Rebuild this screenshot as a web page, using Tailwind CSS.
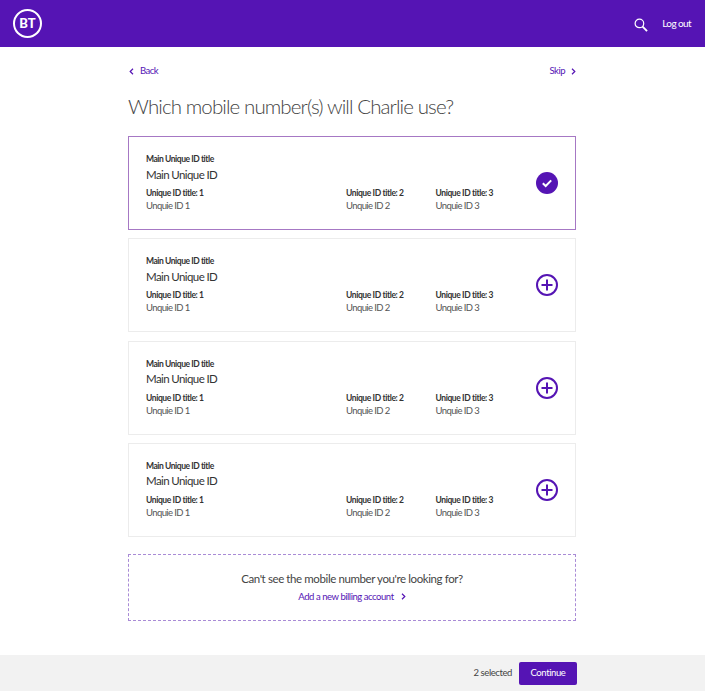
<!DOCTYPE html>
<html lang="en">
<head>
  <meta charset="UTF-8">
  <meta name="viewport" content="width=device-width, initial-scale=1.0">
  <title>Which mobile number</title>
  <script src="https://cdn.jsdelivr.net/npm/@tailwindcss/browser@4"></script>
</head>
<body class="h-[691px] overflow-hidden bg-white font-['Lato',sans-serif] text-[#333333] flex flex-col">
  <header class="h-[47px] bg-[#5514b4] flex items-center justify-between pl-[13px] pr-[14px] shrink-0">
    <div class="w-[29px] h-[29px] rounded-full border-2 border-white flex items-center justify-center text-white text-[13px] font-black">BT</div>
    <div class="flex items-center gap-[14px] text-white text-[10px] tracking-[-0.6px]">
      <svg class="mt-[2px]" width="14" height="14" viewBox="0 0 15 15" fill="none" stroke="white"><circle cx="5.8" cy="5.8" r="4.6" stroke-width="1.3"/><path d="M9.2 9.2L14 14" stroke-width="2"/></svg>
      <span>Log out</span>
    </div>
  </header>

  <main class="w-[448px] ml-[128px] flex-1">
    <div class="flex justify-between items-center mt-[17px] h-[14px] text-[9.5px] tracking-[-0.5px] text-[#5514b4]">
      <a class="flex items-center gap-[6px] pl-[1px]">
        <svg width="5" height="7" viewBox="0 0 5 7" fill="none" stroke="#5514b4" stroke-width="1.2"><path d="M4 .8L1.2 3.5 4 6.2"/></svg>
        Back
      </a>
      <a class="flex items-center gap-[6px]">
        Skip
        <svg width="5" height="7" viewBox="0 0 5 7" fill="none" stroke="#5514b4" stroke-width="1.2"><path d="M1 .8L3.8 3.5 1 6.2"/></svg>
      </a>
    </div>
    <h1 class="mt-[8px] h-[40px] leading-[40px] text-[20.5px] tracking-[-0.9px] font-light text-[#444444]">Which mobile number(s) will Charlie use?</h1>

    <div class="mt-[10px] flex flex-col gap-[8.3px]">
      <div class="h-[94px] border border-[#a678c4] pl-[17px] pr-[17px] flex items-center justify-between">
        <div class="w-[371px]">
          <p class="text-[8.5px] tracking-[-0.45px] font-bold leading-[12px]">Main Unique ID title</p>
          <p class="text-[11.5px] tracking-[-0.6px] leading-[17px] mt-[0.5px]">Main Unique ID</p>
          <div class="grid grid-cols-[200px_89.5px_1fr] mt-[4.5px]">
            <div><p class="text-[8.5px] tracking-[-0.4px] font-bold leading-[12px]">Unique ID title: 1</p><p class="text-[9.5px] tracking-[-0.6px] leading-[14px] text-[#555555]">Unquie ID 1</p></div>
            <div><p class="text-[8.5px] tracking-[-0.4px] font-bold leading-[12px]">Unique ID title: 2</p><p class="text-[9.5px] tracking-[-0.6px] leading-[14px] text-[#555555]">Unquie ID 2</p></div>
            <div><p class="text-[8.5px] tracking-[-0.4px] font-bold leading-[12px]">Unique ID title: 3</p><p class="text-[9.5px] tracking-[-0.6px] leading-[14px] text-[#555555]">Unquie ID 3</p></div>
          </div>
        </div>
        <svg width="22" height="22" viewBox="0 0 22 22"><circle cx="11" cy="11" r="11" fill="#5514b4"/><path d="M6.8 11.2l2.9 2.8 5.5-5.6" fill="none" stroke="white" stroke-width="2"/></svg>
      </div>
      <div class="h-[94px] border border-[#ececec] pl-[17px] pr-[17px] flex items-center justify-between">
        <div class="w-[371px]">
          <p class="text-[8.5px] tracking-[-0.45px] font-bold leading-[12px]">Main Unique ID title</p>
          <p class="text-[11.5px] tracking-[-0.6px] leading-[17px] mt-[0.5px]">Main Unique ID</p>
          <div class="grid grid-cols-[200px_89.5px_1fr] mt-[4.5px]">
            <div><p class="text-[8.5px] tracking-[-0.4px] font-bold leading-[12px]">Unique ID title: 1</p><p class="text-[9.5px] tracking-[-0.6px] leading-[14px] text-[#555555]">Unquie ID 1</p></div>
            <div><p class="text-[8.5px] tracking-[-0.4px] font-bold leading-[12px]">Unique ID title: 2</p><p class="text-[9.5px] tracking-[-0.6px] leading-[14px] text-[#555555]">Unquie ID 2</p></div>
            <div><p class="text-[8.5px] tracking-[-0.4px] font-bold leading-[12px]">Unique ID title: 3</p><p class="text-[9.5px] tracking-[-0.6px] leading-[14px] text-[#555555]">Unquie ID 3</p></div>
          </div>
        </div>
        <svg width="22" height="22" viewBox="0 0 22 22" fill="none" stroke="#5514b4" stroke-width="2"><circle cx="11" cy="11" r="10"/><path d="M11 5.5v11M5.5 11h11"/></svg>
      </div>
      <div class="h-[94px] border border-[#ececec] pl-[17px] pr-[17px] flex items-center justify-between">
        <div class="w-[371px]">
          <p class="text-[8.5px] tracking-[-0.45px] font-bold leading-[12px]">Main Unique ID title</p>
          <p class="text-[11.5px] tracking-[-0.6px] leading-[17px] mt-[0.5px]">Main Unique ID</p>
          <div class="grid grid-cols-[200px_89.5px_1fr] mt-[4.5px]">
            <div><p class="text-[8.5px] tracking-[-0.4px] font-bold leading-[12px]">Unique ID title: 1</p><p class="text-[9.5px] tracking-[-0.6px] leading-[14px] text-[#555555]">Unquie ID 1</p></div>
            <div><p class="text-[8.5px] tracking-[-0.4px] font-bold leading-[12px]">Unique ID title: 2</p><p class="text-[9.5px] tracking-[-0.6px] leading-[14px] text-[#555555]">Unquie ID 2</p></div>
            <div><p class="text-[8.5px] tracking-[-0.4px] font-bold leading-[12px]">Unique ID title: 3</p><p class="text-[9.5px] tracking-[-0.6px] leading-[14px] text-[#555555]">Unquie ID 3</p></div>
          </div>
        </div>
        <svg width="22" height="22" viewBox="0 0 22 22" fill="none" stroke="#5514b4" stroke-width="2"><circle cx="11" cy="11" r="10"/><path d="M11 5.5v11M5.5 11h11"/></svg>
      </div>
      <div class="h-[94px] border border-[#ececec] pl-[17px] pr-[17px] flex items-center justify-between">
        <div class="w-[371px]">
          <p class="text-[8.5px] tracking-[-0.45px] font-bold leading-[12px]">Main Unique ID title</p>
          <p class="text-[11.5px] tracking-[-0.6px] leading-[17px] mt-[0.5px]">Main Unique ID</p>
          <div class="grid grid-cols-[200px_89.5px_1fr] mt-[4.5px]">
            <div><p class="text-[8.5px] tracking-[-0.4px] font-bold leading-[12px]">Unique ID title: 1</p><p class="text-[9.5px] tracking-[-0.6px] leading-[14px] text-[#555555]">Unquie ID 1</p></div>
            <div><p class="text-[8.5px] tracking-[-0.4px] font-bold leading-[12px]">Unique ID title: 2</p><p class="text-[9.5px] tracking-[-0.6px] leading-[14px] text-[#555555]">Unquie ID 2</p></div>
            <div><p class="text-[8.5px] tracking-[-0.4px] font-bold leading-[12px]">Unique ID title: 3</p><p class="text-[9.5px] tracking-[-0.6px] leading-[14px] text-[#555555]">Unquie ID 3</p></div>
          </div>
        </div>
        <svg width="22" height="22" viewBox="0 0 22 22" fill="none" stroke="#5514b4" stroke-width="2"><circle cx="11" cy="11" r="10"/><path d="M11 5.5v11M5.5 11h11"/></svg>
      </div>
    </div>

    <div class="mt-[17px] h-[67px] border border-dashed border-[#a98bd6] flex flex-col items-center pt-[15px]">
      <p class="text-[11.5px] tracking-[-0.4px] leading-[18px] text-[#444444]">Can't see the mobile number you're looking for?</p>
      <a class="mt-[1px] flex items-center gap-[7px] text-[9.5px] tracking-[-0.45px] leading-[16px] text-[#5514b4]">
        Add a new billing account
        <svg width="5" height="7" viewBox="0 0 5 7" fill="none" stroke="#5514b4" stroke-width="1.2"><path d="M1 .8L3.8 3.5 1 6.2"/></svg>
      </a>
    </div>
  </main>

  <footer class="h-[36px] bg-[#f2f2f2] flex items-center justify-end gap-[7px] pr-[128px] shrink-0">
    <span class="text-[9.5px] tracking-[-0.4px] text-[#444444]">2 selected</span>
    <button class="w-[58px] h-[23px] rounded-[2px] bg-[#5514b4] text-white text-[9.5px] tracking-[-0.4px]">Continue</button>
  </footer>
</body>
</html>
